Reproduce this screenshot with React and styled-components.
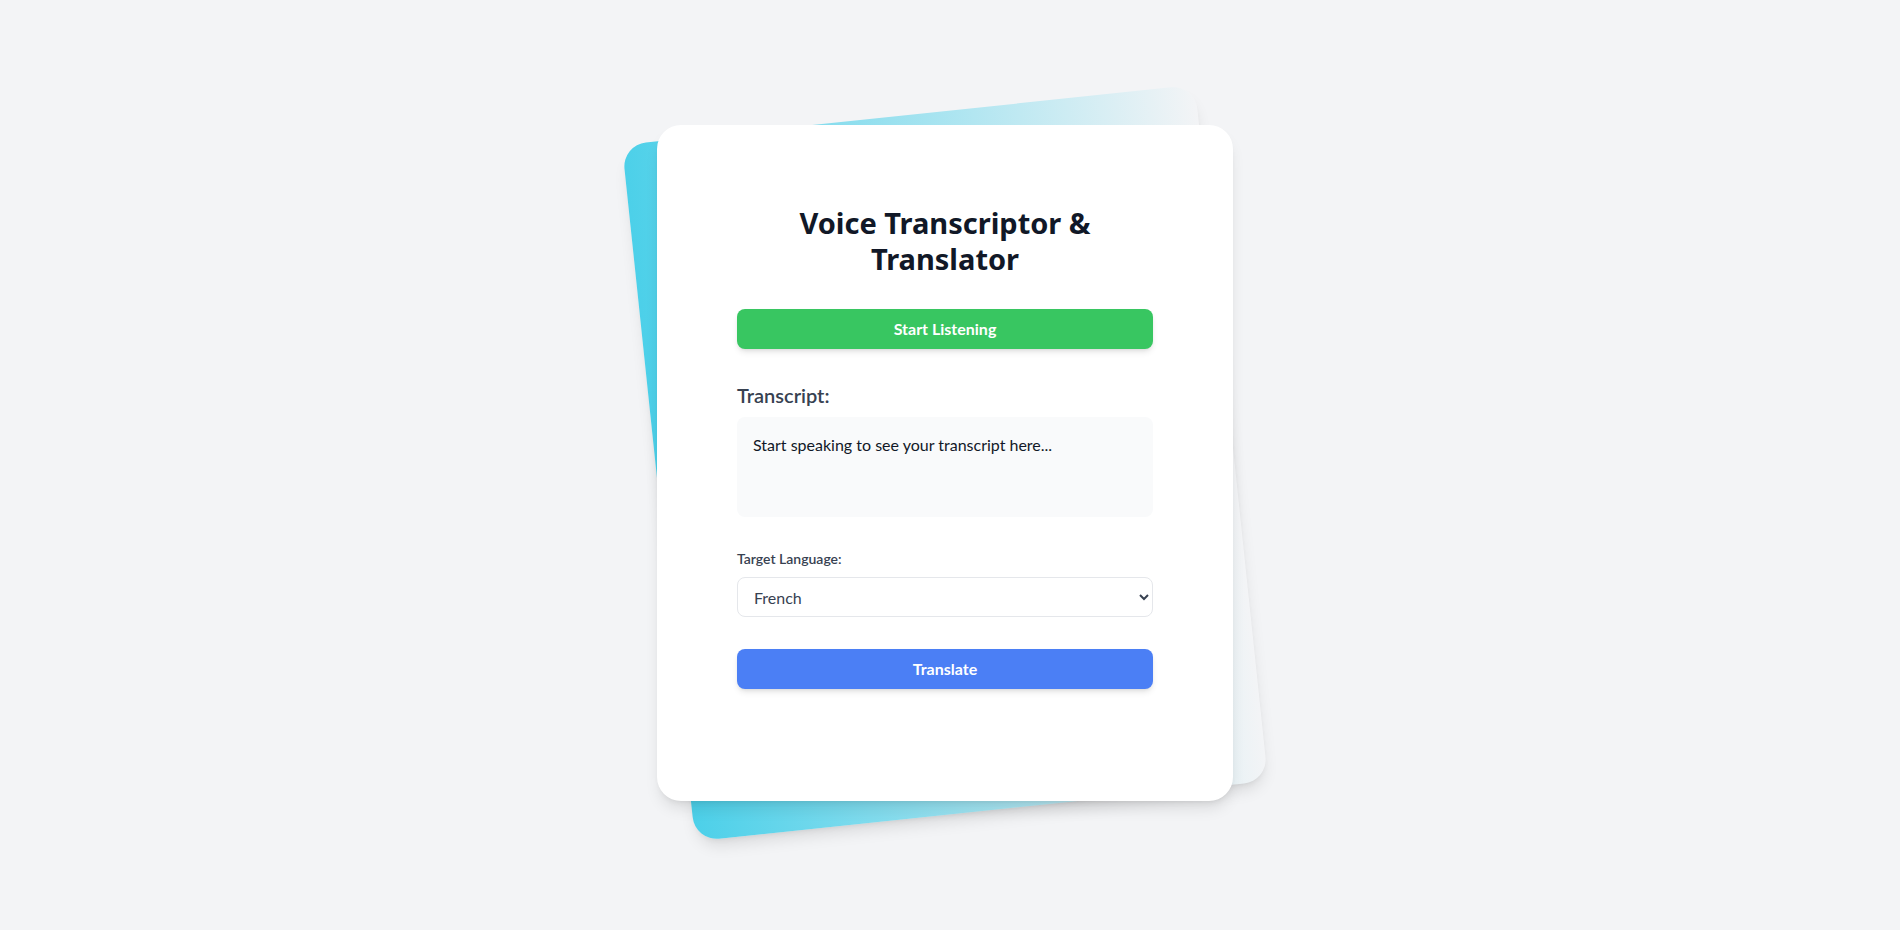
import React from "react"
import styled, { createGlobalStyle } from "styled-components"

const GlobalStyle = createGlobalStyle`
  html, body {
    margin: 0;
    padding: 0;
  }
  body {
    font-family: Lato, "Noto Sans", sans-serif;
    background-color: #f3f4f6;
  }
  * {
    box-sizing: border-box;
  }
`

const Page = styled.div`
  min-height: 100vh;
  background-color: #f3f4f6;
  padding: 46px 10px 50px 0;
  display: flex;
  flex-direction: column;
  justify-content: center;
`

const Stack = styled.div`
  position: relative;
  padding: 12px 0;
  width: 100%;
  max-width: 576px;
  margin: 0 auto;
`

const Backdrop = styled.div`
  position: absolute;
  inset: 0;
  border-radius: 24px;
  background-image: linear-gradient(to right, #4cd0e9, rgba(76, 208, 233, 0));
  box-shadow: 0 10px 15px -3px rgba(0, 0, 0, 0.1), 0 4px 6px -4px rgba(0, 0, 0, 0.1);
  transform: rotate(-6deg);
`

const Card = styled.div`
  position: relative;
  background-color: #ffffff;
  border-radius: 24px;
  padding: 80px 80px 112px;
  box-shadow: 0 10px 15px -3px rgba(0, 0, 0, 0.1), 0 4px 6px -4px rgba(0, 0, 0, 0.1);
`

const Content = styled.div`
  max-width: 448px;
  margin: 0 auto;
`

const Title = styled.h1`
  margin: 0 0 32px;
  font-family: "Noto Sans", Lato, sans-serif;
  font-size: 29px;
  line-height: 36px;
  font-weight: 700;
  text-align: center;
  color: #111827;
`

const Button = styled.button`
  display: block;
  width: 100%;
  padding: 8px 16px;
  border: none;
  border-radius: 8px;
  font-family: inherit;
  font-size: 16px;
  line-height: 24px;
  font-weight: 700;
  color: #ffffff;
  cursor: pointer;
  background-color: ${(p) => (p.$tone === "blue" ? "#4b7ff5" : "#38c661")};
  box-shadow: 0 4px 6px -1px rgba(0, 0, 0, 0.1), 0 2px 4px -2px rgba(0, 0, 0, 0.1);
`

const Section = styled.div`
  margin-top: 32px;
`

const SectionTitle = styled.h2`
  margin: 0 0 8px;
  font-size: 20px;
  line-height: 28px;
  font-weight: 600;
  color: #374151;
`

const TranscriptBox = styled.div`
  min-height: 100px;
  padding: 16px;
  border-radius: 8px;
  background-color: #f9fafb;
  font-size: 16px;
  line-height: 24px;
  color: #111827;
`

const FieldLabel = styled.label`
  display: block;
  margin-bottom: 8px;
  font-size: 14px;
  line-height: 20px;
  font-weight: 600;
  color: #374151;
`

const Select = styled.select`
  display: block;
  width: 100%;
  height: 40px;
  padding: 0 12px;
  border: 1px solid #e5e7eb;
  border-radius: 8px;
  background-color: #ffffff;
  font-family: inherit;
  font-size: 16px;
  color: #374151;
`

function App() {
  const [language, setLanguage] = React.useState("fr")

  return (
    <>
      <GlobalStyle />
      <Page>
        <Stack>
          <Backdrop />
          <Card>
            <Content>
              <Title>Voice Transcriptor &amp; Translator</Title>
              <Button $tone="green">Start Listening</Button>
              <Section>
                <SectionTitle>Transcript:</SectionTitle>
                <TranscriptBox>Start speaking to see your transcript here...</TranscriptBox>
              </Section>
              <Section>
                <FieldLabel htmlFor="target-language">Target Language:</FieldLabel>
                <Select
                  id="target-language"
                  value={language}
                  onChange={(e) => setLanguage(e.target.value)}
                >
                  <option value="es">Spanish</option>
                  <option value="fr">French</option>
                  <option value="de">German</option>
                  <option value="it">Italian</option>
                  <option value="ja">Japanese</option>
                </Select>
              </Section>
              <Section>
                <Button $tone="blue">Translate</Button>
              </Section>
            </Content>
          </Card>
        </Stack>
      </Page>
    </>
  )
}

export default App
